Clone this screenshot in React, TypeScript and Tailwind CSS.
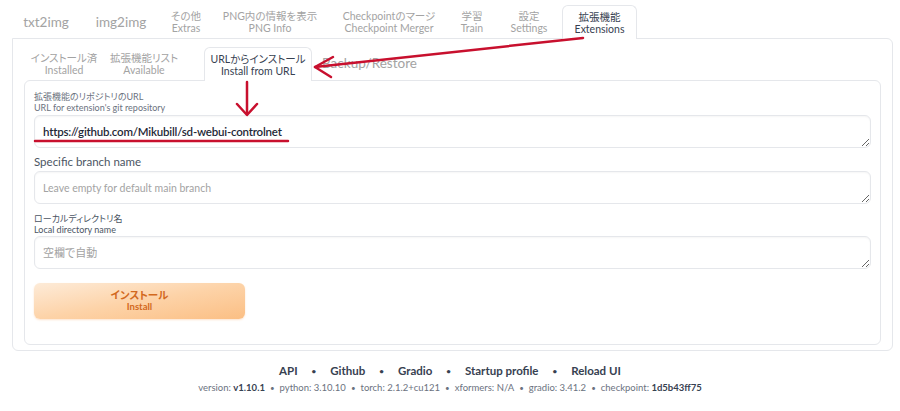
import type { ReactNode } from "react";

const font = "font-['Lato','Noto_Sans_CJK_JP',sans-serif] [font-feature-settings:'palt']";

type TopTab = { jp: string; en?: string; w: string; active?: boolean };

const topTabs: TopTab[] = [
  { jp: "txt2img", w: "w-[68px]" },
  { jp: "img2img", w: "w-[82px]" },
  { jp: "その他", en: "Extras", w: "w-[48px]" },
  { jp: "PNG内の情報を表示", en: "PNG Info", w: "w-[120px]" },
  { jp: "Checkpointのマージ", en: "Checkpoint Merger", w: "w-[118px]" },
  { jp: "学習", en: "Train", w: "w-[48px]" },
  { jp: "設定", en: "Settings", w: "w-[66px]" },
  { jp: "拡張機能", en: "Extensions", w: "w-[75px]", active: true },
];

function TabLabel({
  jp,
  en,
  active,
  size = "text-[10.5px]",
}: {
  jp: string;
  en?: string;
  active?: boolean;
  size?: string;
}) {
  const color = active ? "text-[#374151]" : "text-[#a3a3a3]";
  if (!en) {
    return <span className={`text-[13.5px] leading-[18px] ${color}`}>{jp}</span>;
  }
  return (
    <span className={`flex flex-col items-center ${color}`}>
      <span className={`${size} leading-[12px] whitespace-nowrap`}>{jp}</span>
      <span className={`${size} leading-[12px] whitespace-nowrap`}>{en}</span>
    </span>
  );
}

function Field({ label, children }: { label: ReactNode; children: ReactNode }) {
  return (
    <div className="flex flex-col">
      {label}
      {children}
    </div>
  );
}

const areaClass =
  "block w-full h-[33px] box-border rounded-md border border-[#e5e7eb] bg-white px-[8px] py-[7px] leading-[18px] text-[#1f2937] shadow-[inset_0_1px_2px_rgba(0,0,0,0.04)] outline-none resize-y placeholder:text-[#a3a3a3]";

function Dot() {
  return <span className="text-[8px]">•</span>;
}

export default function App() {
  return (
    <div className={`relative h-[411px] w-[900px] overflow-hidden bg-white ${font}`}>
      <div className="pl-[12px] pr-[7px] pt-[5px]">
        {/* top tabs */}
        <div className="flex h-[33px]">
          {topTabs.map((t) =>
            t.active ? (
              <div
                key={t.jp}
                className={`${t.w} relative z-10 -mb-px flex h-[34px] items-center justify-center rounded-t-md border border-b-0 border-[#e5e7eb] bg-white`}
              >
                <TabLabel jp={t.jp} en={t.en} active />
              </div>
            ) : (
              <div key={t.jp} className={`${t.w} flex items-center justify-center`}>
                <TabLabel jp={t.jp} en={t.en} />
              </div>
            ),
          )}
        </div>

        {/* outer panel */}
        <div className="h-[313px] rounded-b-md rounded-tr-md border border-[#e5e7eb] px-[11px] pt-[8px]">
          {/* inner tabs */}
          <div className="flex h-[33px]">
            <div className="flex w-[80px] items-center justify-center">
              <TabLabel jp="インストール済" en="Installed" size="text-[10.5px]" />
            </div>
            <div className="flex w-[80px] items-center justify-center">
              <TabLabel jp="拡張機能リスト" en="Available" size="text-[10.5px]" />
            </div>
            <div className="ml-[20px] relative z-10 -mb-px flex h-[34px] w-[108px] items-center justify-center rounded-t-md border border-b-0 border-[#e5e7eb] bg-white">
              <TabLabel jp="URLからインストール" en="Install from URL" active size="text-[10.5px]" />
            </div>
            <div className="flex items-center pl-[10px]">
              <span className="text-[13.5px] text-[#a3a3a3]">Backup/Restore</span>
            </div>
          </div>

          {/* inner panel */}
          <div className="h-[265px] rounded-md border border-[#e5e7eb] px-[9px] pt-[10px]">
            <Field
              label={
                <div className="mb-[2px] text-[#6b7280]">
                  <div className="text-[9px] leading-[11px]">拡張機能のリポジトリのURL</div>
                  <div className="text-[9px] leading-[11px]">URL for extension's git repository</div>
                </div>
              }
            >
              <textarea
                readOnly
                rows={1}
                className={`${areaClass} text-[11.5px] font-semibold tracking-[-0.2px]`}
                value="https://github.com/Mikubill/sd-webui-controlnet"
              />
            </Field>

            <div className="mt-[6px]">
              <Field
                label={
                  <div className="mb-[1px] text-[11.5px] leading-[16px] text-[#4b5563]">
                    Specific branch name
                  </div>
                }
              >
                <textarea
                  readOnly
                  rows={1}
                  className={`${areaClass} text-[10.5px]`}
                  placeholder="Leave empty for default main branch"
                />
              </Field>
            </div>

            <div className="mt-[9px]">
              <Field
                label={
                  <div className="mb-[1px] text-[#4b5563]">
                    <div className="text-[9px] leading-[11px]">ローカルディレクトリ名</div>
                    <div className="text-[9px] leading-[11px]">Local directory name</div>
                  </div>
                }
              >
                <textarea
                  readOnly
                  rows={1}
                  className={`${areaClass} text-[11px]`}
                  placeholder="空欄で自動"
                />
              </Field>
            </div>

            <button
              type="button"
              className="mt-[14px] flex h-[36px] w-[211px] flex-col items-center justify-center rounded-md bg-gradient-to-br from-[#fdebd8] via-[#fdd3a8] to-[#fbbf84] text-[#d2691e] shadow-[0_1px_2px_rgba(251,146,60,0.25)]"
            >
              <span className="text-[10.5px] font-bold leading-[12px]">インストール</span>
              <span className="text-[9.5px] font-bold leading-[12px]">Install</span>
            </button>
          </div>
        </div>
      </div>

      {/* footer */}
      <div className="mt-[12px] flex items-center justify-center gap-[14px] text-[11.5px] font-bold leading-[16px] text-[#374151]">
        <span>API</span>
        <Dot />
        <span>Github</span>
        <Dot />
        <span>Gradio</span>
        <Dot />
        <span>Startup profile</span>
        <Dot />
        <span>Reload UI</span>
      </div>
      <div className="mt-[2px] flex items-center justify-center gap-[5px] text-[9.5px] leading-[14px] text-[#6b7280]">
        <span>
          version: <b className="text-[#374151]">v1.10.1</b>
        </span>
        <Dot />
        <span>python: 3.10.10</span>
        <Dot />
        <span>torch: 2.1.2+cu121</span>
        <Dot />
        <span>xformers: N/A</span>
        <Dot />
        <span>gradio: 3.41.2</span>
        <Dot />
        <span>
          checkpoint: <b className="text-[#374151]">1d5b43ff75</b>
        </span>
      </div>

      {/* red annotation marks */}
      <svg
        className="pointer-events-none absolute left-0 top-0 z-20"
        width="900"
        height="411"
        viewBox="0 0 900 411"
        fill="none"
        stroke="#c8102e"
        strokeWidth="2.5"
        strokeLinecap="round"
        strokeLinejoin="round"
      >
        <path d="M583 38 L315 67" />
        <path d="M333 57 L315 67 L331 77" />
        <path d="M247 82 L247 114" />
        <path d="M237 104 L247 115 L257 104" />
        <path d="M35 141 L288 141" />
      </svg>
    </div>
  );
}
